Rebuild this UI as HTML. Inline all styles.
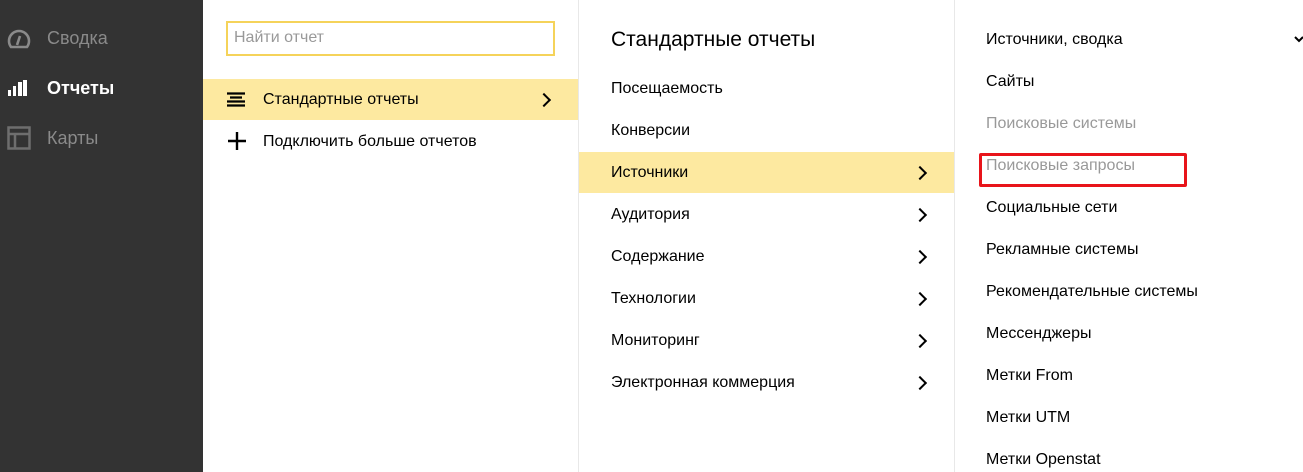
<!DOCTYPE html>
<html><head><meta charset="utf-8"><style>
*{margin:0;padding:0;box-sizing:border-box}
body{width:1303px;height:472px;overflow:hidden;background:#fff;font-family:"Liberation Sans","DejaVu Sans",sans-serif;position:relative;color:#000}
.sb{position:absolute;left:0;top:0;width:203px;height:472px;background:#333}
.sb div{position:absolute;left:47px;font-size:18px;color:#8a8a8a}
.sb svg{position:absolute}
.t{position:absolute;font-size:16px;white-space:nowrap}
.hl{position:absolute;background:#fde9a0}
.vl{position:absolute;top:0;width:1px;height:472px;background:#e8e8e8}
.ch{position:absolute;width:10px;height:10px;border-right:2px solid #000;border-top:2px solid #000;transform:rotate(45deg)}
.g{color:#999}
</style></head><body>
<div class="sb">
<svg style="left:7px;top:28px" width="24" height="22" viewBox="0 0 24 22"><path d="M4 19 A10 10 0 1 1 20 19 Z" fill="none" stroke="#8a8a8a" stroke-width="2.6"/><path d="M10 17 L13 8" stroke="#8a8a8a" stroke-width="2.6"/></svg>
<div style="top:28px">Сводка</div>
<svg style="left:8px;top:80px" width="20" height="16"><rect x="0" y="10" width="3" height="6" fill="#fff"/><rect x="5" y="6" width="3" height="10" fill="#fff"/><rect x="10" y="2" width="4" height="14" fill="#fff"/><rect x="15" y="0" width="4" height="16" fill="#fff"/></svg>
<div style="top:78px;color:#fff;font-weight:bold">Отчеты</div>
<svg style="left:7px;top:126px" width="24" height="24"><rect x="1.5" y="1.5" width="21" height="21" fill="none" stroke="#6e6e6e" stroke-width="2.5"/><path d="M1 8 H23 M8 8 V23" stroke="#6e6e6e" stroke-width="2.5"/></svg>
<div style="top:128px">Карты</div>
</div>
<div style="position:absolute;left:226px;top:21px;width:329px;height:35px;border:2px solid #f5d35a"></div>
<div class="t" style="left:234px;top:29px;color:#999">Найти отчет</div>
<div class="hl" style="left:203px;top:79px;width:375px;height:41px"></div>
<svg style="position:absolute;left:227px;top:92px" width="18" height="16"><path d="M0 1.5H18M3 5.5H15M0 9.5H18M0 13.5H18" stroke="#000" stroke-width="2.2"/></svg>
<div class="t" style="left:263px;top:91px">Стандартные отчеты</div>
<div class="ch" style="left:539px;top:95px"></div>
<svg style="position:absolute;left:228px;top:132px" width="18" height="18"><path d="M9 0V18M0 9H18" stroke="#000" stroke-width="2.4"/></svg>
<div class="t" style="left:263px;top:133px">Подключить больше отчетов</div>
<div class="vl" style="left:578px"></div>
<div class="vl" style="left:954px"></div>
<div class="t" style="left:611px;top:28px;font-size:21px">Стандартные отчеты</div>
<div class="hl" style="left:579px;top:152px;width:375px;height:41px"></div>
<div class="t" style="left:611px;top:80px">Посещаемость</div>
<div class="t" style="left:611px;top:122px">Конверсии</div>
<div class="t" style="left:611px;top:164px">Источники</div>
<div class="t" style="left:611px;top:206px">Аудитория</div>
<div class="t" style="left:611px;top:248px">Содержание</div>
<div class="t" style="left:611px;top:290px">Технологии</div>
<div class="t" style="left:611px;top:332px">Мониторинг</div>
<div class="t" style="left:611px;top:374px">Электронная коммерция</div>
<div class="ch" style="left:915px;top:168px"></div>
<div class="ch" style="left:915px;top:210px"></div>
<div class="ch" style="left:915px;top:252px"></div>
<div class="ch" style="left:915px;top:294px"></div>
<div class="ch" style="left:915px;top:336px"></div>
<div class="ch" style="left:915px;top:378px"></div>
<div class="t" style="left:986px;top:31px">Источники, сводка</div>
<svg style="position:absolute;left:1294px;top:36px" width="10" height="7"><path d="M1 1L5 5L9 1" fill="none" stroke="#000" stroke-width="2"/></svg>
<div class="t" style="left:986px;top:73px">Сайты</div>
<div class="t g" style="left:986px;top:115px">Поисковые системы</div>
<div class="t g" style="left:986px;top:157px">Поисковые запросы</div>
<div style="position:absolute;left:979px;top:153px;width:208px;height:34px;border:3px solid #e8141a;border-radius:2px"></div>
<div class="t" style="left:986px;top:199px">Социальные сети</div>
<div class="t" style="left:986px;top:241px">Рекламные системы</div>
<div class="t" style="left:986px;top:283px">Рекомендательные системы</div>
<div class="t" style="left:986px;top:325px">Мессенджеры</div>
<div class="t" style="left:986px;top:367px">Метки From</div>
<div class="t" style="left:986px;top:409px">Метки UTM</div>
<div class="t" style="left:986px;top:451px">Метки Openstat</div>
</body></html>
